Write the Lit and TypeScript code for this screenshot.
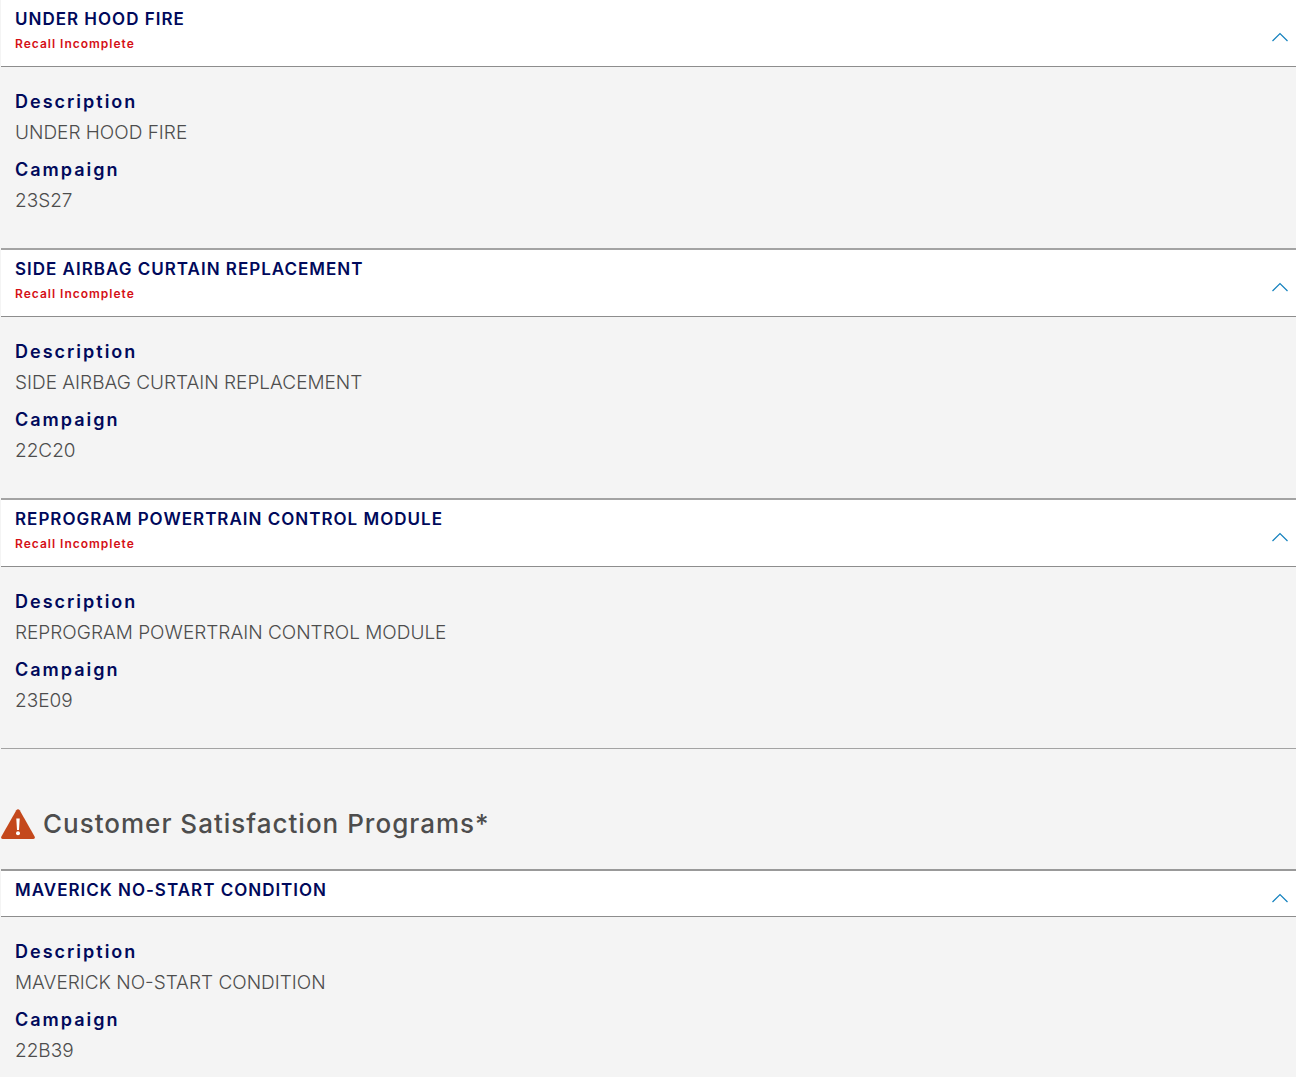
import { LitElement, html, css, svg, nothing } from "lit";
import { customElement, property, state } from "lit/decorators.js";

interface Campaign {
  title: string;
  code: string;
  status?: string;
}

const RECALLS: Campaign[] = [
  { title: "UNDER HOOD FIRE", code: "23S27", status: "Recall Incomplete" },
  { title: "SIDE AIRBAG CURTAIN REPLACEMENT", code: "22C20", status: "Recall Incomplete" },
  { title: "REPROGRAM POWERTRAIN CONTROL MODULE", code: "23E09", status: "Recall Incomplete" },
];

const PROGRAMS: Campaign[] = [{ title: "MAVERICK NO-START CONDITION", code: "22B39" }];

@customElement("campaign-item")
export class CampaignItem extends LitElement {
  static styles = css`
    :host {
      display: block;
    }
    .heading {
      margin: 0;
      font: inherit;
    }
    .toggle {
      display: flex;
      align-items: center;
      justify-content: space-between;
      box-sizing: border-box;
      width: 100%;
      min-height: 46px;
      margin: 0;
      padding: 7px 8px 9px 14px;
      border: 0;
      border-bottom: 1px solid #8d8d8d;
      background: #fff;
      font: inherit;
      text-align: left;
      cursor: pointer;
    }
    .labels {
      display: flex;
      flex-direction: column;
      align-self: flex-start;
    }
    .title {
      color: #00095b;
      font-size: 17px;
      font-weight: 600;
      line-height: 24px;
      letter-spacing: 1px;
    }
    .status {
      color: #d50f16;
      font-size: 12px;
      font-weight: 600;
      line-height: 26px;
      letter-spacing: 1px;
    }
    .chevron {
      flex: none;
      width: 17px;
      height: 10px;
      margin-top: 10px;
      fill: none;
      stroke: #1381be;
      stroke-width: 1.2;
    }
    .closed {
      transform: rotate(180deg);
    }
    .details {
      margin: 0;
      padding: 20px 14px 31px;
      border-bottom: 1px solid #a3a3a3;
    }
    .term {
      color: #00095b;
      font-size: 18px;
      font-weight: 600;
      line-height: 30px;
      letter-spacing: 2px;
    }
    .value {
      margin: 0 0 6px;
      color: #4d4d4d;
      font-size: 19px;
      font-weight: 300;
      line-height: 32px;
    }
    .value:last-child {
      margin-bottom: 0;
    }
  `;

  @property({ attribute: false }) campaign!: Campaign;
  @state() private open = true;

  render() {
    const { title, code, status } = this.campaign;
    return html`
      <h3 class="heading">
        <button
          class="toggle"
          type="button"
          aria-expanded=${this.open ? "true" : "false"}
          @click=${() => (this.open = !this.open)}
        >
          <span class="labels">
            <span class="title">${title}</span>
            ${status ? html`<span class="status">${status}</span>` : nothing}
          </span>
          <svg class="chevron ${this.open ? "" : "closed"}" viewBox="0 0 17 10" aria-hidden="true">
            ${svg`<path d="M1.500 9 9 1.500 16.500 9" />`}
          </svg>
        </button>
      </h3>
      ${this.open
        ? html`<dl class="details">
            <dt class="term">Description</dt>
            <dd class="value">${title}</dd>
            <dt class="term">Campaign</dt>
            <dd class="value">${code}</dd>
          </dl>`
        : nothing}
    `;
  }
}

@customElement("app-root")
export class AppRoot extends LitElement {
  static styles = css`
    :host {
      display: block;
      min-height: 100vh;
      padding-left: 1px;
      background: #f4f4f4;
      font-family: Inter, "Liberation Sans", sans-serif;
    }
    .item + .item {
      border-top: 1px solid #a3a3a3;
    }
    .section-title {
      display: flex;
      align-items: center;
      gap: 8px;
      margin: 0;
      padding: 55px 0 25px;
      color: #4d4d4d;
      font-size: 26px;
      font-weight: 500;
      line-height: 40px;
      letter-spacing: 1px;
    }
    .warning {
      flex: none;
      width: 34px;
      height: 30px;
    }
    .programs {
      border-top: 2px solid #999;
    }
  `;

  private list(items: Campaign[]) {
    return items.map((c) => html`<campaign-item class="item" .campaign=${c}></campaign-item>`);
  }

  render() {
    return html`
      <main>
        <section>${this.list(RECALLS)}</section>
        <section>
          <h2 class="section-title">
            <svg class="warning" viewBox="0 0 34 30" aria-hidden="true">
              <path
                fill="#c4481c"
                d="M15.300 1.300Q17-.9 18.700 1.300L33.600 27.600Q34.600 30 32.400 30H1.600Q-.6 30 .4 27.600Z"
              />
              <path fill="#fff" d="M15.300 9.500h3.400l-.7 11.500h-2z" />
              <circle cx="17" cy="24.300" r="2" fill="#fff" />
            </svg>
            <span>Customer Satisfaction Programs*</span>
          </h2>
          <div class="programs">${this.list(PROGRAMS)}</div>
        </section>
      </main>
    `;
  }
}
